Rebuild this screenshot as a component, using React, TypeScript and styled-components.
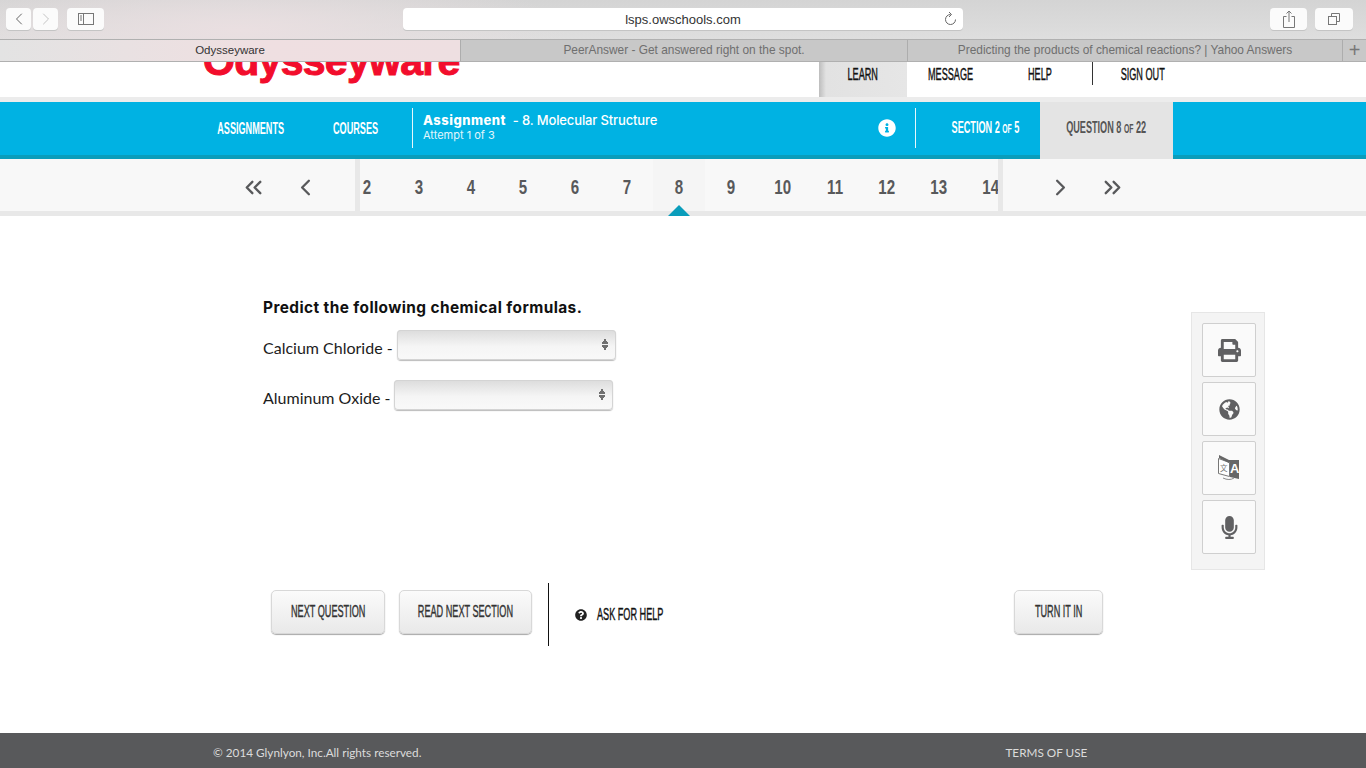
import React from "react"
import styled, { createGlobalStyle, css } from "styled-components"
import { FaGlobeAmericas, FaInfoCircle, FaMicrophone, FaPrint, FaQuestionCircle } from "react-icons/fa"
import { ChevronLeft, ChevronRight, ChevronsLeft, ChevronsRight } from "lucide-react"

const GlobalStyle = createGlobalStyle`
  html, body { margin: 0; padding: 0; background: #fff; overflow: hidden; }
  * { box-sizing: border-box; }
`

// no condensed gothic face here, so squeeze a bold sans
const gothic = css`
  display: inline-block;
  flex: none;
  font-family: "Liberation Sans", Arial, sans-serif;
  font-weight: 700;
  white-space: nowrap;
  transform: scaleX(0.57);
  transform-origin: center;
`

const App = () => {
  const numbers = [2, 3, 4, 5, 6, 7, 8, 9, 10, 11, 12, 13, 14]
  return (
    <Page>
      <GlobalStyle />
      <Toolbar>
        <NavPair>
          <ChromeButton $w={25}>
            <ChevronLeft size={20} strokeWidth={1.2} color="#666" />
          </ChromeButton>
          <ChromeButton $w={25}>
            <ChevronRight size={20} strokeWidth={1.2} color="#c4c4c4" />
          </ChromeButton>
        </NavPair>
        <ChromeButton $w={37}>
          <svg width="16" height="12" viewBox="0 0 16 12" fill="none" stroke="#777">
            <rect x="0.5" y="0.5" width="15" height="11" />
            <path d="M5.5 0.5v11M2 3h2M2 5h2M2 7h2" />
          </svg>
        </ChromeButton>
        <AddressBar>
          lsps.owschools.com
          <ReloadSlot>
            <svg width="13" height="15" viewBox="0 0 13 15" fill="none" stroke="#666">
              <path d="M6.5 3.5A5 5 0 1 0 11.5 8.5" />
              <path d="M5 1l2.5 2.5L5 6" />
            </svg>
          </ReloadSlot>
        </AddressBar>
        <ChromeButton $w={37}>
          <svg width="12" height="18" viewBox="0 0 12 18" fill="none" stroke="#777">
            <path d="M3.5 6.5H.5v11h11v-11h-3M6 12V1M3.5 3.5L6 1l2.5 2.5" />
          </svg>
        </ChromeButton>
        <ChromeButton $w={38}>
          <svg width="12" height="12" viewBox="0 0 12 12" fill="none" stroke="#777">
            <path d="M3.5 3V.5h8v8H8.5" />
            <rect x="0.5" y="3.5" width="8" height="8" />
          </svg>
        </ChromeButton>
      </Toolbar>

      <TabStrip>
        <Tab $w={461} $active>Odysseyware</Tab>
        <Tab $w={447}>PeerAnswer - Get answered right on the spot.</Tab>
        <Tab $w={435}>Predicting the products of chemical reactions? | Yahoo Answers</Tab>
        <NewTab>+</NewTab>
      </TabStrip>

      <Header>
        <Logo>Odysseyware</Logo>
        <TopNav>
          <TopItem $w={88} $active><TopLabel>LEARN</TopLabel></TopItem>
          <TopItem $w={88}><TopLabel>MESSAGE</TopLabel></TopItem>
          <TopItem $w={90}><TopLabel>HELP</TopLabel></TopItem>
          <TopDivider />
          <TopItem $w={100}><TopLabel>SIGN OUT</TopLabel></TopItem>
        </TopNav>
      </Header>

      <BlueBar>
        <BlueLink $w={122}><BlueLabel>ASSIGNMENTS</BlueLabel></BlueLink>
        <BlueLink $w={88}><BlueLabel>COURSES</BlueLabel></BlueLink>
        <BlueDivider $left={12} />
        <TitleBlock>
          <AssignmentTitle><strong>Assignment</strong>&nbsp; - 8. Molecular Structure</AssignmentTitle>
          <Attempt>Attempt 1 of 3</Attempt>
        </TitleBlock>
        <InfoSlot><FaInfoCircle size={18} color="#fff" /></InfoSlot>
        <BlueDivider $left={19} />
        <SectionCell><BlueLabel>SECTION 2 <small>OF</small> 5</BlueLabel></SectionCell>
        <QuestionCell><QuestionLabel>QUESTION 8 <small>OF</small> 22</QuestionLabel></QuestionCell>
      </BlueBar>

      <Pager>
        <PagerEdge $side="left">
          <PagerCell><ChevronsLeft size={27} strokeWidth={2.1} /></PagerCell>
          <PagerCell><ChevronLeft size={27} strokeWidth={2.1} /></PagerCell>
        </PagerEdge>
        <PagerRule />
        <PagerTrack>
          {numbers.map((n) => (
            <PagerCell key={n} $active={n === 8}>
              <PagerNumber>{n}</PagerNumber>
              {n === 8 && <PagerMarker />}
            </PagerCell>
          ))}
        </PagerTrack>
        <PagerRule />
        <PagerEdge $side="right">
          <PagerCell><ChevronRight size={27} strokeWidth={2.1} /></PagerCell>
          <PagerCell><ChevronsRight size={27} strokeWidth={2.1} /></PagerCell>
        </PagerEdge>
      </Pager>

      <Main>
        <Work>
          <Question>
            <Prompt>Predict the following chemical formulas.</Prompt>
            <FormulaRow>
              <FormulaLabel>Calcium Chloride -</FormulaLabel>
              <SelectBox />
            </FormulaRow>
            <FormulaRow>
              <FormulaLabel>Aluminum Oxide -</FormulaLabel>
              <SelectBox />
            </FormulaRow>
          </Question>
          <Actions>
            <ActionButton $w={114}><ActionLabel>NEXT QUESTION</ActionLabel></ActionButton>
            <ActionButton $w={133}><ActionLabel>READ NEXT SECTION</ActionLabel></ActionButton>
            <ActionDivider />
            <HelpLink>
              <FaQuestionCircle size={12} color="#222" />
              <HelpLabel>ASK FOR HELP</HelpLabel>
            </HelpLink>
            <TurnIn $w={89}><ActionLabel>TURN IT IN</ActionLabel></TurnIn>
          </Actions>
        </Work>
        <ToolPanel>
          <ToolButton><FaPrint size={23} /></ToolButton>
          <ToolButton><FaGlobeAmericas size={21} /></ToolButton>
          <ToolButton>
            <svg width="22" height="26" viewBox="0 0 22 26">
              <path d="M10 5l11 0v19l-9-2z" fill="#666" />
              <path d="M.5 3.5l11 4v14l-11-3z" fill="#fff" stroke="#777" />
              <path d="M1 0l10 5v3L1 3z" fill="#666" />
              <path d="M5 23c4 2 8 2 11 0" fill="none" stroke="#888" />
              <text x="12" y="18" fontSize="13" fontWeight="700" fill="#fff" fontFamily="Liberation Sans, sans-serif">A</text>
              <text x="2" y="16" fontSize="7.5" fill="#777" fontFamily="Noto Sans CJK SC, sans-serif">文</text>
            </svg>
          </ToolButton>
          <ToolButton><FaMicrophone size={23} /></ToolButton>
        </ToolPanel>
      </Main>

      <Footer>
        <span>© 2014 Glynlyon, Inc.All rights reserved.</span>
        <FooterLink>TERMS OF USE</FooterLink>
      </Footer>
    </Page>
  )
}

const SelectBox = () => (
  <SelectWrap>
    <NativeSelect aria-label="answer" defaultValue="">
      <option value=""></option>
    </NativeSelect>
    <SelectArrows />
  </SelectWrap>
)

const Page = styled.div`
  width: 1366px;
  height: 768px;
  display: flex;
  flex-direction: column;
  overflow: hidden;
  background: #fff;
  font-family: "Liberation Sans", Arial, sans-serif;
`

const Toolbar = styled.div`
  height: 39px;
  flex: none;
  display: flex;
  align-items: flex-start;
  gap: 8px;
  padding: 8px 12px 0 6px;
  background: radial-gradient(ellipse 330px 60px at 240px 30px, #eadfe1, rgba(234, 223, 225, 0) 100%),
    linear-gradient(#d4d4d4, #dedede);
`

const NavPair = styled.div`
  display: flex;
  gap: 2px;
  margin-right: 1px;
`

const ChromeButton = styled.div<{ $w: number }>`
  width: ${(p) => p.$w}px;
  height: 22px;
  display: flex;
  align-items: center;
  justify-content: center;
  background: #fbfbfb;
  border-radius: 4px;
  box-shadow: 0 1px 0 #c4c4c4;
`

const AddressBar = styled.div`
  position: relative;
  width: 560px;
  height: 22px;
  margin: 0 299px 0 291px;
  display: flex;
  align-items: center;
  justify-content: center;
  background: #fff;
  border-radius: 4px;
  box-shadow: 0 1px 0 #c4c4c4;
  font-size: 13px;
  color: #333;
`

const ReloadSlot = styled.span`
  position: absolute;
  right: 6px;
  top: 3px;
  display: flex;
`

const TabStrip = styled.div`
  height: 23px;
  flex: none;
  display: flex;
  background: #c8c8c8;
  border-top: 1px solid #b0b0b0;
  border-bottom: 1px solid #b0b0b0;
`

const Tab = styled.div<{ $w: number; $active?: boolean }>`
  width: ${(p) => p.$w}px;
  flex: none;
  display: flex;
  align-items: center;
  justify-content: center;
  padding-bottom: 1px;
  font-size: ${(p) => (p.$active ? "11.5px" : "11.9px")};
  color: ${(p) => (p.$active ? "#333" : "#6f6f6f")};
  background: ${(p) => (p.$active ? "linear-gradient(90deg, #e3e3e3, #efdfe1 55%, #eedfe1)" : "#c8c8c8")};
  border-right: 1px solid #adadad;
`

const NewTab = styled.div`
  flex: 1;
  display: flex;
  align-items: center;
  justify-content: center;
  font-size: 20px;
  font-weight: 300;
  color: #777;
`

const Header = styled.header`
  height: 35px;
  flex: none;
  display: flex;
  padding-left: 203px;
  background: #fff;
  overflow: hidden;
`

const Logo = styled.div`
  width: 257px;
  flex: none;
  height: 35px;
  margin-top: -21px;
  font-size: 41px;
  line-height: 41px;
  font-weight: 700;
  letter-spacing: -0.7px;
  color: #f20d2c;
  -webkit-text-stroke: 1px #f20d2c;
  white-space: nowrap;
`

const TopNav = styled.nav`
  display: flex;
  margin-left: 359px;
`

const TopItem = styled.div<{ $w: number; $active?: boolean }>`
  width: ${(p) => p.$w}px;
  height: 35px;
  padding-top: 3px;
  display: flex;
  justify-content: center;
  align-items: flex-start;
  background: ${(p) => (p.$active ? "linear-gradient(90deg, #bdbdbd, #e2e2e2 8%, #e6e6e6)" : "#fff")};
`

const TopLabel = styled.span`
  ${gothic}
  font-size: 16px;
  line-height: 19px;
  font-weight: 400;
  color: #111;
  -webkit-text-stroke: 0.4px #111;
`

const TopDivider = styled.div`
  width: 1px;
  height: 23px;
  margin-left: 7px;
  background: #333;
`

const BlueBar = styled.div`
  height: 57px;
  flex: none;
  display: flex;
  align-items: flex-start;
  padding-left: 190px;
  margin-top: 5px;
  background: #00b2e3;
  border-bottom: 4px solid #0a9dbb;
  box-shadow: 0 -5px 0 #ececec;
`

const BlueLink = styled.div<{ $w: number }>`
  width: ${(p) => p.$w}px;
  height: 53px;
  padding-top: 17px;
  display: flex;
  justify-content: center;
  align-items: flex-start;
`

const BlueLabel = styled.span`
  ${gothic}
  font-size: 16px;
  line-height: 19px;
  color: #fff;

  small {
    font-size: 12px;
  }
`

const BlueDivider = styled.div<{ $left: number }>`
  width: 1px;
  height: 40px;
  margin: 6px 0 0 ${(p) => p.$left}px;
  background: #e6f7fc;
`

const TitleBlock = styled.div`
  width: 465px;
  flex: none;
  padding: 10px 0 0 10px;
  color: #fff;
`

const AssignmentTitle = styled.div`
  font-family: Inter, sans-serif;
  font-size: 13px;
  line-height: 16px;
  font-weight: 500;
  letter-spacing: -0.13px;
  white-space: nowrap;

  strong {
    font-weight: 800;
    letter-spacing: 0.5px;
  }
`

const Attempt = styled.div`
  font-family: Inter, sans-serif;
  font-size: 11px;
  line-height: 14px;
  color: #e2f6fc;
`

const InfoSlot = styled.div`
  width: 18px;
  margin-top: 17px;
  display: flex;
`

const SectionCell = styled.div`
  width: 109px;
  margin-left: 15px;
  padding-top: 16px;
  display: flex;
  justify-content: center;
  align-items: flex-start;
`

const QuestionCell = styled.div`
  width: 133px;
  height: 57px;
  padding-top: 16px;
  display: flex;
  justify-content: center;
  align-items: flex-start;
  background: #e4e4e4;
`

const QuestionLabel = styled(BlueLabel)`
  color: #555;
`

const Pager = styled.div`
  height: 57px;
  flex: none;
  display: flex;
  background: #f8f8f8;
  border-bottom: 5px solid #e8e8e8;
  color: #58595b;
`

const PagerEdge = styled.div<{ $side: "left" | "right" }>`
  ${(p) => (p.$side === "left" ? "width: 355px; flex: none;" : "flex: 1;")}
  display: flex;
  justify-content: ${(p) => (p.$side === "left" ? "flex-end" : "flex-start")};
  padding: ${(p) => (p.$side === "left" ? "0 24px 0 0" : "0 0 0 31px")};
`

const PagerRule = styled.div`
  width: 5px;
  flex: none;
  background: #e8e8e8;
`

// clip the sides only, the marker of the current question hangs below
const PagerTrack = styled.div`
  width: 638px;
  flex: none;
  display: flex;
  clip-path: inset(0 0 -6px 0);

  & > :first-child {
    margin-left: -19px;
  }
`

const PagerCell = styled.div<{ $active?: boolean }>`
  width: 52px;
  height: 52px;
  flex: none;
  position: relative;
  display: flex;
  align-items: center;
  justify-content: center;
  padding-top: 4px;
  background: ${(p) => (p.$active ? "#f5f5f5" : "transparent")};
`

const PagerNumber = styled.span`
  ${gothic}
  font-size: 21px;
  color: #58595b;
  transform: scaleX(0.72);
`

const PagerMarker = styled.span`
  position: absolute;
  left: 15px;
  bottom: -5px;
  width: 0;
  height: 0;
  border-left: 11px solid transparent;
  border-right: 11px solid transparent;
  border-bottom: 11px solid #0a9dbb;
`

const Main = styled.main`
  flex: 1;
  display: grid;
  grid-template-columns: 840px 74px;
  column-gap: 88px;
  padding: 82px 0 0 263px;
`

const Work = styled.div`
  display: flex;
  flex-direction: column;
`

const Question = styled.div`
  height: 285px;
`

const Prompt = styled.div`
  margin-bottom: 12px;
  font-family: Inter, sans-serif;
  font-size: 15.4px;
  line-height: 20px;
  font-weight: 700;
  letter-spacing: 0.42px;
  color: #111;
`

const FormulaRow = styled.div`
  height: 50px;
  display: flex;
  align-items: flex-start;
  gap: 4px;
`

const FormulaLabel = styled.label`
  padding-top: 8px;
  font-family: Lato, sans-serif;
  font-size: 16px;
  line-height: 20px;
  color: #1c1c1c;
  white-space: nowrap;
`

const SelectWrap = styled.div`
  position: relative;
  width: 219px;
  height: 30px;
`

const NativeSelect = styled.select`
  appearance: none;
  display: block;
  width: 100%;
  height: 100%;
  border: 0;
  border-radius: 4px;
  background: linear-gradient(#dcdcdc, #f5f5f5 55%, #f9f9f9);
  box-shadow: inset 0 0 0 1px #d4d4d4, 0 1px 1px #bbb;
`

const SelectArrows = styled.span`
  position: absolute;
  right: 7px;
  top: 8px;
  width: 8px;
  height: 13px;
  background:
    conic-gradient(from 150deg at 50% 0, #707070 60deg, transparent 0) top / 8px 6px no-repeat,
    conic-gradient(from -30deg at 50% 100%, #707070 60deg, transparent 0) bottom / 8px 6px no-repeat;
`

const Actions = styled.div`
  display: flex;
  align-items: flex-start;
  padding-left: 8px;
`

const ActionButton = styled.button<{ $w: number }>`
  width: ${(p) => p.$w}px;
  height: 44px;
  margin: 7px 14px 0 0;
  padding: 0;
  display: flex;
  align-items: center;
  justify-content: center;
  border: 1px solid #d8d8d8;
  border-radius: 5px;
  background: linear-gradient(#fbfbfb, #e9e9e9);
  box-shadow: 0 1px 1px #a8a8a8;
  flex: none;
`

const TurnIn = styled(ActionButton)`
  margin-left: 351px;
  margin-right: 0;
`

const ActionLabel = styled.span`
  ${gothic}
  font-size: 16px;
  font-weight: 400;
  color: #333;
  -webkit-text-stroke: 0.4px #333;
`

const ActionDivider = styled.div`
  width: 1px;
  height: 63px;
  flex: none;
  margin-left: 2px;
  background: #111;
`

const HelpLink = styled.div`
  width: 114px;
  height: 63px;
  flex: none;
  display: flex;
  align-items: center;
  padding-left: 26px;

  svg {
    flex: none;
  }
`

const HelpLabel = styled.span`
  ${gothic}
  font-size: 16px;
  font-weight: 400;
  color: #111;
  -webkit-text-stroke: 0.4px #111;
  transform-origin: left center;
  margin-left: 10px;
  margin-top: 1px;
`

const ToolPanel = styled.aside`
  height: 258px;
  margin-top: 14px;
  display: flex;
  flex-direction: column;
  gap: 5px;
  padding: 10px 8px 0 10px;
  background: #f4f4f4;
  border: 1px solid #e6e6e6;
`

const ToolButton = styled.div`
  width: 54px;
  height: 54px;
  flex: none;
  display: flex;
  align-items: center;
  justify-content: center;
  background: #fafafa;
  border: 1px solid #cfcfcf;
  border-radius: 2px;
  color: #606062;
`

const Footer = styled.footer`
  height: 35px;
  flex: none;
  display: flex;
  align-items: center;
  padding: 3px 0 0 213px;
  background: #58595b;
  font-family: Lato, sans-serif;
  font-size: 11.75px;
  color: #dcdcdc;
`

const FooterLink = styled.span`
  margin-left: 584px;
`

export default App
